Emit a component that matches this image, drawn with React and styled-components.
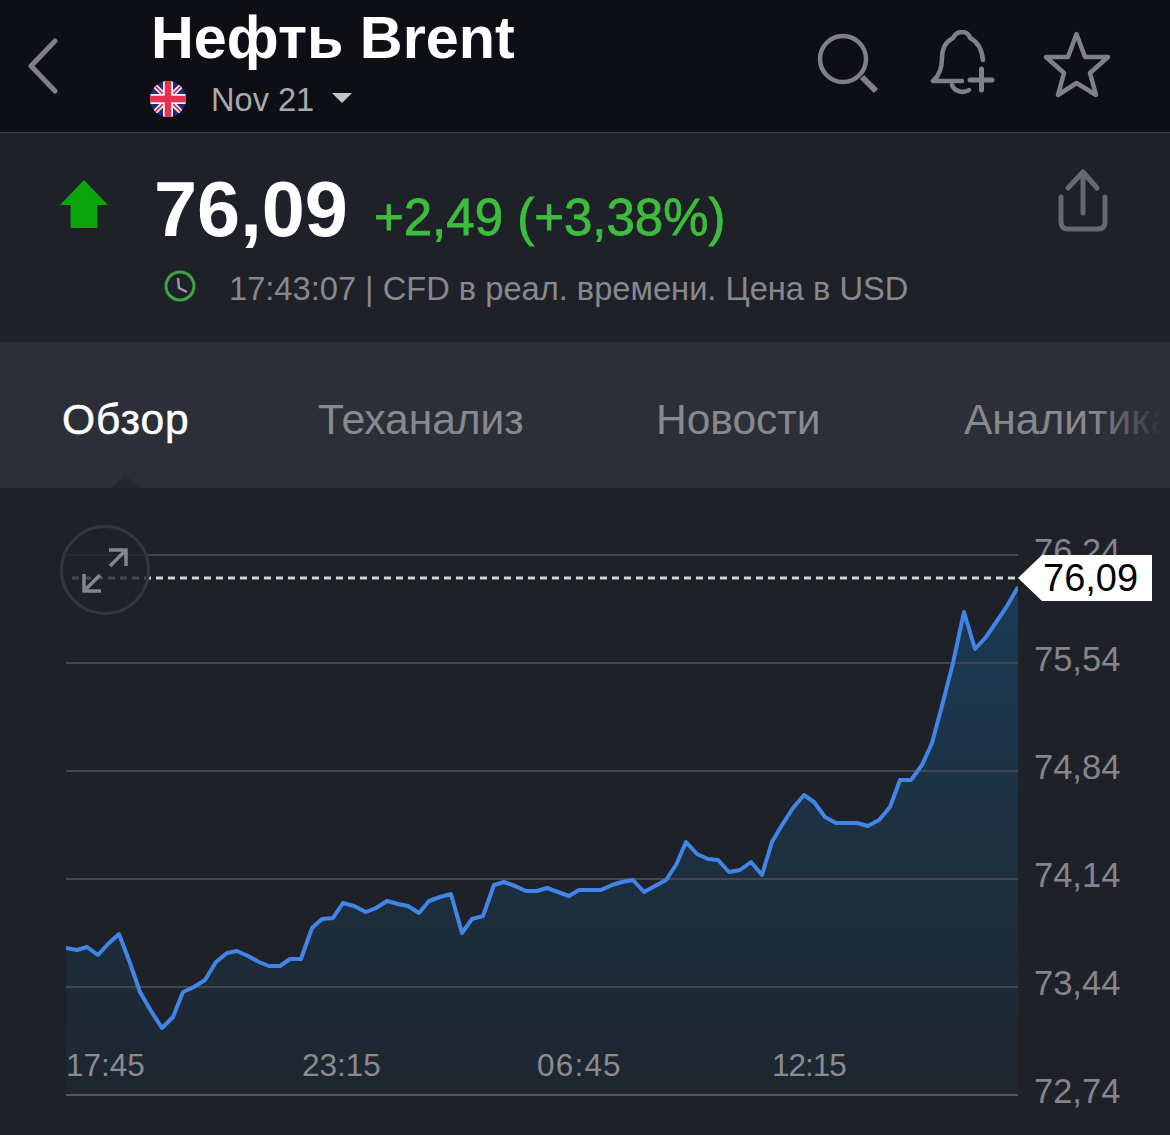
import React from 'react';
import styled, { createGlobalStyle } from 'styled-components';

const GlobalStyle = createGlobalStyle`
  html, body {
    margin: 0;
    padding: 0;
    background: #1f2129;
  }
  body {
    font-family: "Liberation Sans", Arial, sans-serif;
  }
`;

const Page = styled.div`
  width: 1170px;
  height: 1135px;
  overflow: hidden;
  display: flex;
  flex-direction: column;
`;

const Header = styled.header`
  height: 132px;
  flex-shrink: 0;
  display: flex;
  align-items: flex-start;
  background: #0e0f14;
  border-bottom: 1px solid #45464e;
`;

const BackButton = styled.div`
  width: 150px;
  padding: 38px 0 0 28px;
  box-sizing: border-box;
  flex-shrink: 0;
  svg { display: block; }
`;

const TitleBlock = styled.div`
  flex: 1;
  padding-top: 7px;
`;

const Title = styled.h1`
  margin: 0 0 0 1px;
  font-size: 59.3px;
  line-height: 62px;
  font-weight: 700;
  color: #fff;
`;

const ContractRow = styled.div`
  display: flex;
  align-items: center;
  margin-top: 12px;
  height: 36px;
  color: #a9aaae;
  font-size: 32.6px;
`;

const ContractName = styled.span`
  margin-left: 25px;
  margin-top: 2px;
`;

const Caret = styled.span`
  width: 0;
  height: 0;
  margin-left: 18px;
  margin-top: -3px;
  border-left: 10px solid transparent;
  border-right: 10px solid transparent;
  border-top: 10px solid #c4c5c9;
`;

const HeaderIcons = styled.div`
  display: flex;
  align-items: flex-start;
  gap: 47px;
  padding: 30px 58px 0 0;
  svg { display: block; }
`;

const IconStroke = styled.g`
  fill: none;
  stroke: ${(p) => p.$color || '#808187'};
  stroke-width: ${(p) => p.$width || 4.5};
  stroke-linecap: round;
  stroke-linejoin: round;
`;

const Quote = styled.section`
  height: 209px;
  flex-shrink: 0;
  box-sizing: border-box;
  padding: 36px 61px 0 60px;
  background: #1f2129;
`;

const PriceRow = styled.div`
  display: flex;
  align-items: flex-start;
  height: 86px;
`;

const UpArrow = styled.div`
  width: 48px;
  height: 48px;
  margin-top: 11px;
  flex-shrink: 0;
  background: #0aa50a;
  clip-path: polygon(50% 0, 100% 52%, 78% 52%, 78% 100%, 22% 100%, 22% 52%, 0 52%);
`;

const Price = styled.div`
  margin-left: 46px;
  margin-top: -3px;
  font-size: 77.5px;
  line-height: 86px;
  font-weight: 700;
  color: #fff;
`;

const Change = styled.div`
  margin-left: 26px;
  margin-top: 19px;
  font-size: 51px;
  line-height: 60px;
  color: #3dbd3d;
  -webkit-text-stroke: 0.8px #3dbd3d;
`;

const ShareIcon = styled.div`
  margin-left: auto;
  margin-top: -1px;
  svg { display: block; }
`;

const MetaRow = styled.div`
  display: flex;
  align-items: center;
  height: 40px;
  margin-top: 12px;
  padding-left: 104px;
  font-size: 32.65px;
  color: #88898f;
  svg { display: block; flex-shrink: 0; margin-top: -2px; }
`;

const MetaText = styled.span`
  margin-left: 33px;
  margin-top: 4px;
  white-space: nowrap;
`;

const Tabs = styled.nav`
  position: relative;
  height: 146px;
  flex-shrink: 0;
  display: flex;
  align-items: center;
  box-sizing: border-box;
  padding: 9px 0 0 62px;
  overflow: hidden;
  background: #2c2f37;
  font-size: 42.5px;
  &::after {
    content: '';
    position: absolute;
    top: 0;
    right: 0;
    bottom: 0;
    width: 76px;
    background: linear-gradient(to right, rgba(44, 47, 55, 0), #2c2f37 90%);
  }
`;

const Tab = styled.div`
  flex-shrink: 0;
  width: ${(p) => p.$width || 'auto'};
  white-space: nowrap;
  color: ${(p) => (p.$active ? '#fff' : '#88898f')};
  ${(p) => p.$active && '-webkit-text-stroke: 0.5px #fff; letter-spacing: 1px;'}
`;

const TabPointer = styled.span`
  position: absolute;
  left: 111px;
  bottom: 0;
  width: 0;
  height: 0;
  border-left: 14px solid transparent;
  border-right: 14px solid transparent;
  border-bottom: 13px solid #22262f;
`;

const ChartSection = styled.section`
  flex: 1;
  display: flex;
  padding-left: 66px;
  background: #1f2129;
`;

const Plot = styled.div`
  position: relative;
  width: 952px;
  height: 647px;
  flex-shrink: 0;
  svg { display: block; }
`;

const ExpandButton = styled.div`
  position: absolute;
  left: -6px;
  top: 37px;
  width: 90px;
  height: 90px;
  box-sizing: border-box;
  border: 3px solid #35373f;
  border-radius: 50%;
  background: rgba(31, 33, 41, 0.78);
  svg { display: block; }
`;

const TimeLabel = styled.span`
  position: absolute;
  left: ${(p) => p.$left}px;
  top: 558px;
  font-size: 31.5px;
  line-height: 38px;
  letter-spacing: ${(p) => p.$spacing || 0}px;
  color: #8b8c91;
`;

const Axis = styled.div`
  display: flex;
  flex-direction: column;
  padding: 9px 0 0 16px;
`;

const AxisLabel = styled.div`
  height: 108px;
  line-height: 108px;
  font-size: 34.5px;
  color: #85868c;
`;

const PriceTag = styled.div`
  position: absolute;
  left: 952px;
  top: 67px;
  width: 134px;
  height: 46px;
  box-sizing: border-box;
  padding-left: 25px;
  line-height: 46px;
  font-size: 38px;
  color: #000;
  background: #fff;
  clip-path: polygon(0 50%, 24px 0, 100% 0, 100% 100%, 24px 100%);
`;

const points = [
  [66, 948], [77, 950], [87, 947], [98, 955], [108, 944], [119, 934], [130, 963],
  [140, 992], [151, 1011], [162, 1028], [173, 1017], [183, 992], [194, 987],
  [205, 980], [216, 962], [227, 953], [237, 951], [248, 956], [259, 962],
  [269, 966], [280, 966], [290, 959], [301, 959], [312, 928], [322, 919],
  [333, 918], [343, 903], [354, 906], [366, 912], [376, 908], [387, 901],
  [398, 904], [408, 906], [419, 913], [429, 901], [440, 897], [451, 894],
  [462, 933], [472, 919], [483, 916], [494, 885], [504, 882], [515, 886],
  [526, 891], [537, 891], [547, 888], [558, 892], [569, 896], [579, 890],
  [590, 890], [601, 890], [612, 885], [622, 882], [633, 880], [644, 892],
  [655, 886], [666, 880], [676, 865], [686, 842], [697, 854], [708, 859],
  [718, 860], [729, 872], [740, 870], [751, 862], [762, 875], [772, 842],
  [782, 825], [793, 808], [804, 795], [814, 802], [825, 817], [836, 823],
  [847, 823], [857, 823], [868, 826], [879, 820], [890, 807], [900, 780],
  [911, 780], [922, 765], [932, 743], [943, 702], [953, 663], [964, 612],
  [975, 649], [986, 637], [997, 621], [1007, 606], [1018, 587],
];

const linePoints = points.map((p) => p.join(',')).join(' ');
const areaPoints = `66,1095 ${linePoints} 1018,1095`;
const gridLines = [555, 663, 771, 879, 987];
const times = [
  { label: '17:45', left: 0 },
  { label: '23:15', left: 236 },
  { label: '06:45', left: 471, spacing: 1.2 },
  { label: '12:15', left: 706, spacing: -1 },
];
const axisValues = ['76,24', '75,54', '74,84', '74,14', '73,44', '72,74'];

const FlagIcon = () => (
  <svg width="36" height="36" viewBox="0 0 36 36">
    <defs>
      <clipPath id="flag-circle">
        <circle cx="18" cy="18" r="18" />
      </clipPath>
    </defs>
    <g clipPath="url(#flag-circle)">
      <rect width="36" height="36" fill="#1c2a80" />
      <path d="M0 0 L36 36 M36 0 L0 36" stroke="#f4f4f4" strokeWidth="5" />
      <path d="M0 0 L36 36 M36 0 L0 36" stroke="#e5304f" strokeWidth="1.800" />
      <path d="M18 0 V36 M0 18 H36" stroke="#f4f4f4" strokeWidth="10" />
      <path d="M18 0 V36 M0 18 H36" stroke="#e5304f" strokeWidth="6.500" />
    </g>
  </svg>
);

const SearchIcon = () => (
  <svg width="66" height="66" viewBox="816 32 66 66">
    <IconStroke>
      <circle cx="843" cy="61" r="23" />
      <path d="M862 79 L876 93" strokeWidth="6" strokeLinecap="butt" />
    </IconStroke>
  </svg>
);

const BellIcon = () => (
  <svg width="66" height="66" viewBox="929 32 66 66">
    <IconStroke>
      <path d="M983 62 C982 52 978 44 970 40 C969 36 966 34 962 34 C958 34 955 36 953 40 C945 44 942 52 942 60 C942 70 940 77 933 83 L962 83" />
      <path d="M952 87 C954 93 963 96 969 92" />
      <path d="M970 82 H992 M981.500 71 V92" strokeWidth="5" />
    </IconStroke>
  </svg>
);

const StarIcon = () => (
  <svg width="70" height="70" viewBox="1042 31 70 70">
    <IconStroke>
      <path d="M1076.500 35 L1085 58 L1108 58 L1090 74 L1096 96 L1076.500 84 L1058 96 L1064 74 L1046 58 L1068 58 Z" />
    </IconStroke>
  </svg>
);

const ChevronIcon = () => (
  <svg width="32" height="56" viewBox="25 38 32 56">
    <IconStroke $width={5}>
      <path d="M52 41 L28 66 L52 91" />
    </IconStroke>
  </svg>
);

const UploadIcon = () => (
  <svg width="52" height="64" viewBox="1057 168 52 64">
    <IconStroke $color="#666972" $width={5}>
      <path d="M1083 213 V172 M1068 188 L1083 172 L1097 188" />
      <path d="M1061 197 V222 Q1061 229 1068 229 H1098 Q1105 229 1105 222 V197" />
    </IconStroke>
  </svg>
);

const ClockIcon = () => (
  <svg width="32" height="32" viewBox="164 270 32 32">
    <circle cx="180" cy="286" r="14" fill="none" stroke="#3fa63f" strokeWidth="3" />
    <path d="M178 278 L179 288 L187 292" fill="none" stroke="#9a9ca2" strokeWidth="2.500" />
  </svg>
);

const ExpandIcon = () => (
  <svg width="84" height="84" viewBox="63 528 84 84">
    <IconStroke $color="#85868a" $width={3.5}>
      <path d="M109 550 H126 V566 M126 550 L110 566" strokeLinecap="butt" strokeLinejoin="miter" />
      <path d="M84 574 V591 H101 M84 591 L100 575" strokeLinecap="butt" strokeLinejoin="miter" />
    </IconStroke>
  </svg>
);

const Chart = () => (
  <svg width="952" height="647" viewBox="66 488 952 647">
    <defs>
      <linearGradient id="area-fill" gradientUnits="userSpaceOnUse" x1="0" y1="590" x2="0" y2="1095">
        <stop offset="0" stopColor="#1b3a54" />
        <stop offset="1" stopColor="#1e262f" />
      </linearGradient>
    </defs>
    <polygon points={areaPoints} fill="url(#area-fill)" />
    {gridLines.map((y) => (
      <line key={y} x1="66" x2="1018" y1={y} y2={y} stroke="#44464d" strokeWidth="2" />
    ))}
    <line x1="66" x2="1018" y1="1095" y2="1095" stroke="#55575d" strokeWidth="2" />
    <line x1="72" x2="1018" y1="578" y2="578" stroke="#d4d4d4" strokeWidth="3" strokeDasharray="7 5" />
    <polyline points={linePoints} fill="none" stroke="#4285e8" strokeWidth="4" strokeLinejoin="round" />
  </svg>
);

export default function App() {
  return (
    <Page>
      <GlobalStyle />
      <Header>
        <BackButton>
          <ChevronIcon />
        </BackButton>
        <TitleBlock>
          <Title>Нефть Brent</Title>
          <ContractRow>
            <FlagIcon />
            <ContractName>Nov 21</ContractName>
            <Caret />
          </ContractRow>
        </TitleBlock>
        <HeaderIcons>
          <SearchIcon />
          <BellIcon />
          <StarIcon />
        </HeaderIcons>
      </Header>
      <Quote>
        <PriceRow>
          <UpArrow />
          <Price>76,09</Price>
          <Change>+2,49 (+3,38%)</Change>
          <ShareIcon>
            <UploadIcon />
          </ShareIcon>
        </PriceRow>
        <MetaRow>
          <ClockIcon />
          <MetaText>17:43:07 | CFD в реал. времени. Цена в USD</MetaText>
        </MetaRow>
      </Quote>
      <Tabs>
        <Tab $active $width="256px">Обзор</Tab>
        <Tab $width="338px">Теханализ</Tab>
        <Tab $width="308px">Новости</Tab>
        <Tab>Аналитика</Tab>
        <TabPointer />
      </Tabs>
      <ChartSection>
        <Plot>
          <Chart />
          <ExpandButton>
            <ExpandIcon />
          </ExpandButton>
          {times.map((t) => (
            <TimeLabel key={t.label} $left={t.left} $spacing={t.spacing}>{t.label}</TimeLabel>
          ))}
          <PriceTag>76,09</PriceTag>
        </Plot>
        <Axis>
          {axisValues.map((v) => (
            <AxisLabel key={v}>{v}</AxisLabel>
          ))}
        </Axis>
      </ChartSection>
    </Page>
  );
}
